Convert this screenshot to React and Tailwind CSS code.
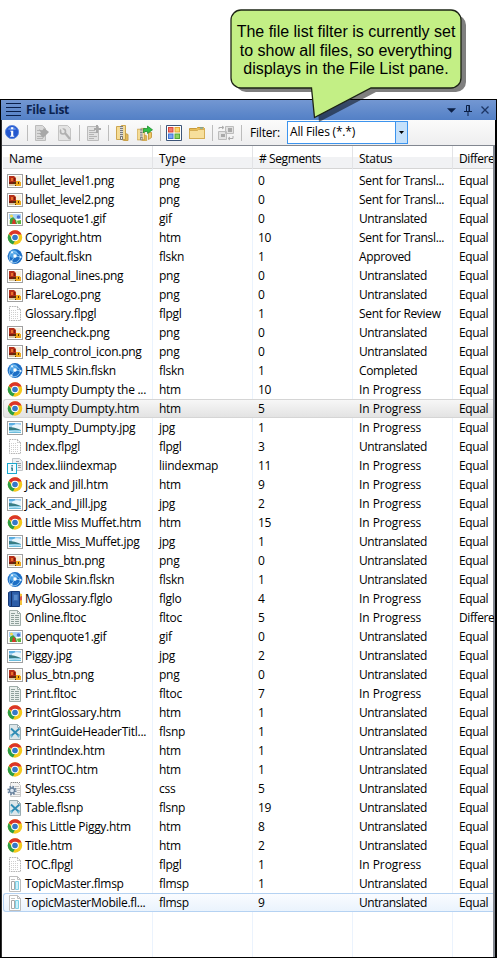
import React from "react";

const PNG = "png", HTM = "htm";
// name, type, segments, status, difference, icon
const rows = [
  ["bullet_level1.png", "png", "0", "Sent for Transl...", "Equal", PNG],
  ["bullet_level2.png", "png", "0", "Sent for Transl...", "Equal", PNG],
  ["closequote1.gif", "gif", "0", "Untranslated", "Equal", "gif"],
  ["Copyright.htm", "htm", "10", "Sent for Transl...", "Equal", HTM],
  ["Default.flskn", "flskn", "1", "Approved", "Equal", "skin"],
  ["diagonal_lines.png", "png", "0", "Untranslated", "Equal", PNG],
  ["FlareLogo.png", "png", "0", "Untranslated", "Equal", PNG],
  ["Glossary.flpgl", "flpgl", "1", "Sent for Review", "Equal", "page"],
  ["greencheck.png", "png", "0", "Untranslated", "Equal", PNG],
  ["help_control_icon.png", "png", "0", "Untranslated", "Equal", PNG],
  ["HTML5 Skin.flskn", "flskn", "1", "Completed", "Equal", "skin"],
  ["Humpty Dumpty the ...", "htm", "10", "In Progress", "Equal", HTM],
  ["Humpty Dumpty.htm", "htm", "5", "In Progress", "Equal", HTM],
  ["Humpty_Dumpty.jpg", "jpg", "1", "In Progress", "Equal", "jpg"],
  ["Index.flpgl", "flpgl", "3", "Untranslated", "Equal", "page"],
  ["Index.liindexmap", "liindexmap", "11", "In Progress", "Equal", "index"],
  ["Jack and Jill.htm", "htm", "9", "In Progress", "Equal", HTM],
  ["Jack_and_Jill.jpg", "jpg", "2", "In Progress", "Equal", "jpg"],
  ["Little Miss Muffet.htm", "htm", "15", "In Progress", "Equal", HTM],
  ["Little_Miss_Muffet.jpg", "jpg", "1", "Untranslated", "Equal", "jpg"],
  ["minus_btn.png", "png", "0", "Untranslated", "Equal", PNG],
  ["Mobile Skin.flskn", "flskn", "1", "Untranslated", "Equal", "skin"],
  ["MyGlossary.flglo", "flglo", "4", "In Progress", "Equal", "book"],
  ["Online.fltoc", "fltoc", "5", "In Progress", "Differe", "toc"],
  ["openquote1.gif", "gif", "0", "Untranslated", "Equal", "gif"],
  ["Piggy.jpg", "jpg", "2", "Untranslated", "Equal", "jpg"],
  ["plus_btn.png", "png", "0", "Untranslated", "Equal", PNG],
  ["Print.fltoc", "fltoc", "7", "In Progress", "Equal", "toc"],
  ["PrintGlossary.htm", "htm", "1", "Untranslated", "Equal", HTM],
  ["PrintGuideHeaderTitl...", "flsnp", "1", "Untranslated", "Equal", "snippet"],
  ["PrintIndex.htm", "htm", "1", "Untranslated", "Equal", HTM],
  ["PrintTOC.htm", "htm", "1", "Untranslated", "Equal", HTM],
  ["Styles.css", "css", "5", "Untranslated", "Equal", "css"],
  ["Table.flsnp", "flsnp", "19", "Untranslated", "Equal", "snippet"],
  ["This Little Piggy.htm", "htm", "8", "Untranslated", "Equal", HTM],
  ["Title.htm", "htm", "2", "Untranslated", "Equal", HTM],
  ["TOC.flpgl", "flpgl", "1", "In Progress", "Equal", "page"],
  ["TopicMaster.flmsp", "flmsp", "1", "Untranslated", "Equal", "master"],
  ["TopicMasterMobile.fl...", "flmsp", "9", "Untranslated", "Equal", "master"],
];

const Frame = ({ children }) => (
  <>
    <rect x=".5" y="1.5" width="15" height="13" fill="#fff" stroke="#a0a0a0" />
    {children}
  </>
);

const Page = ({ fill = "#fff", stroke = "#bdbdbd" }) => (
  <path d="M2.5 .5h8l3 3v12h-11z M10.5 .5v3h3" fill={fill} stroke={stroke} />
);

const fileIcons = {
  png: (
    <Frame>
      <path d="M2 3h12v10H2z" fill="#f6eedb" />
      <path d="M2 3h5l2 2v4H2z" fill="#b5301a" />
      <path d="M4 5h2v3H4z" fill="#e8702c" />
      <path d="M2 9h4v2H2zM7 5h1v3H7z" fill="#7a1c0c" />
      <path d="M2 11h6v2H2z" fill="#d9c9a4" />
      <path d="M9 8h4v1h1v4H8v-3h1z" fill="#f0ac1c" />
      <path d="M6 9h3v2H6zM11 9h1v2h-1zM8 12h1v1H8z" fill="#5a300c" />
    </Frame>
  ),
  jpg: (
    <Frame>
      <path d="M2 3h12v5H2z" fill="#9fd0f2" />
      <path d="M2 3h6v2H2z" fill="#5aaee2" />
      <path d="M5 6q3-3 9-1v4H5z" fill="#eaf6fc" />
      <path d="M2 7q5 0 12 3v1H2z" fill="#377c84" />
      <path d="M2 10h12v3H2z" fill="#6cbcdc" />
      <path d="M2 11.500q6-1 12 0" stroke="#cdeef8" fill="none" />
    </Frame>
  ),
  gif: (
    <Frame>
      <path d="M2 3h12v5H2z" fill="#a9d2f5" />
      <path d="M2 9h12v4H2z" fill="#dceec2" />
      <path d="M3 8l3-2 3 3 1 4H3z" fill="#39a33a" />
      <path d="M6 8l2 1 1 4H5z" fill="#d43a28" />
      <circle cx="11.5" cy="6" r="1.8" fill="#4b70ce" />
      <circle cx="4.5" cy="5" r="1.5" fill="#f3d64d" />
      <path d="M10 10l4-1v4h-3z" fill="#5bb63d" />
    </Frame>
  ),
  htm: (
    <>
      <circle cx="8" cy="7.5" r="7.2" fill="#f4c91c" />
      <path d="M8 7.500L1.800 3.900A7.200 7.200 0 0 1 14.600 4.500H8z" fill="#dc3528" />
      <path d="M1.800 3.900L5.200 9.500l3 1-2.200 4A7.200 7.200 0 0 1 1.800 3.900z" fill="#2c9e46" />
      <circle cx="8" cy="7.5" r="3.8" fill="#fff" />
      <circle cx="8" cy="7.5" r="2.8" fill="#3478c8" />
    </>
  ),
  skin: (
    <>
      <circle cx="8" cy="7.5" r="7.4" fill="#1d6fc6" />
      <circle cx="6.5" cy="5" r="4" fill="#4da2e6" />
      <path d="M8 7L5 3M8 7l6 1M8 7l-4 6M5 3Q9 1 14 8M4 13Q0 8 5 3M4 13q6 3 10-5" fill="none" stroke="#9ccff4" strokeWidth=".8" />
      <circle cx="8" cy="7" r="1.7" fill="#fff" />
      <circle cx="5" cy="3.3" r="1.1" fill="#e6f5ff" />
      <circle cx="13.5" cy="8" r="1.1" fill="#e6f5ff" />
      <circle cx="4.5" cy="12.5" r="1.1" fill="#e6f5ff" />
    </>
  ),
  page: (
    <>
      <path d="M2.5 .5h8l3 3v11h-11z M10.5 .5v3h3" fill="#fff" stroke="#b4b4b4" strokeDasharray="1.6 .8" />
      <path d="M4 4.5h5M4 6.5h8M4 8.5h8M4 10.5h8M4 12.5h8" stroke="#cfcfcf" strokeDasharray="1 1" />
    </>
  ),
  index: (
    <>
      <path d="M5.5 .5h7l3 3v9h-10z" fill="#eef0f2" stroke="#c3c6c9" />
      <path d="M9 3.5h3M10 5.5h4M11 7.5h3M11 9.5h3" stroke="#9aa0a6" />
      <rect x=".5" y="5.5" width="9" height="10" fill="#f2fcff" stroke="#1aa9cf" />
      <path d="M4.500 7h1.200v1.400H4.500zM4 9.500h1.800V13H4.500v-2.600H4z" fill="#14647e" />
    </>
  ),
  book: (
    <>
      <path d="M11 2l4 1v11h-4z" fill="#f5c33a" />
      <path d="M12 6l3-1v4l-3 1z" fill="#e0574a" />
      <path d="M1.5 1.5l2-1h9v15h-10l-1-1z" fill="#2c5da8" stroke="#173a78" />
      <path d="M4.5 1v14" stroke="#142f66" />
      <path d="M6.5 3.5h4.500v6H6.500z" fill="#5689cc" stroke="#3a6ab0" />
    </>
  ),
  toc: (
    <>
      <Page fill="#e9efec" stroke="#9fada9" />
      <path d="M4 3.5h4M4 5.5h3m1 0h4M4 7.5h3m1 0h4M4 9.5h3m1 0h4M4 11.5h3m1 0h4M4 13.5h3m1 0h4" stroke="#8fa09b" />
    </>
  ),
  snippet: (
    <>
      <Page fill="#dce6e9" stroke="#9aacb1" />
      <path d="M4 4.5l8 7.5M12.5 4.5L4 12" stroke="#2f8cb4" strokeWidth="1.8" />
      <path d="M3 10l3 2-2 2zM13 10l-3 2 2 2z" fill="#6cb8d4" />
    </>
  ),
  css: (
    <>
      <path d="M3.5 1.5h7l3 3v11h-10z" fill="#f4f4f4" stroke="#c9c9c9" />
      <path d="M4 1.5h9" stroke="#888" strokeDasharray="1 1" />
      <path d="M8 5.5h4M9 7.5h4M10 9.5h3M10 11.5h3M8 13.5h5" stroke="#c4c4c4" />
      <circle cx="5" cy="9.5" r="3.7" fill="none" stroke="#66809c" strokeWidth="2" strokeDasharray="1.6 1.3" />
      <circle cx="5" cy="9.5" r="2.5" fill="#dce7f2" stroke="#66809c" strokeWidth="1.3" />
    </>
  ),
  master: (
    <>
      <Page />
      <path d="M4.5 5.5h3v8h-3z" fill="#fff" stroke="#a8a8a8" />
      <path d="M8.500 5.500h3v8h-3z" fill="#cdf1fb" stroke="#80cfe4" />
      <path d="M4 3.5h4" stroke="#c4c4c4" />
    </>
  ),
};

const Icon = ({ children, size = "size-4", className = "" }) => (
  <svg viewBox="0 0 16 16" className={`${size} shrink-0 ${className}`} fill="none">
    {children}
  </svg>
);

const Sep = ({ className = "" }) => <div className={`h-4 w-px shrink-0 bg-[#bcbcbc] ${className}`} />;

function Titlebar() {
  return (
    <div className="flex h-5 shrink-0 items-center bg-linear-to-b from-[#7397d2] to-[#5380c6] pr-[7px] pl-[5px]">
      <svg viewBox="0 0 15 14" className="h-[14px] w-[15px] shrink-0" stroke="#0a1f4a">
        <path d="M0 .5h15M0 4.5h15M0 8.5h15M0 12.5h15" />
      </svg>
      <span className="ml-[5px] flex-1 text-[12px] font-bold tracking-[-0.3px] text-[#0b2350]">File List</span>
      <svg viewBox="0 0 10 5" className="mr-2 h-[5px] w-[9px]"><path d="M0 0h10L5 5z" fill="#0b1f45" /></svg>
      <svg viewBox="0 0 8 12" className="mr-[9px] h-3 w-2" fill="none" stroke="#0b1f45">
        <path d="M2.5 7V1.5h3V7M5 1v6M0 7.5h8M4 8v4" />
      </svg>
      <svg viewBox="0 0 8 8" className="h-2 w-2" stroke="#1c3564" strokeWidth="1.3"><path d="M.5.5l7 7M7.5.5l-7 7" /></svg>
    </div>
  );
}

const ZipFolder = () => (
  <g>
    <path d="M1.5 1.5h4l1-1h4v14h-9z" fill="#f5dc96" stroke="#cda650" />
    <path d="M10.5 8.5l2.500 1v6h-4l-2-1h3.500z" fill="#e5b956" stroke="#c9a04a" />
    <path d="M6.500 1v11" stroke="#d8d8d8" strokeWidth="3" />
    <path d="M6.500 1v11" stroke="#7b7b7b" strokeWidth="3" strokeDasharray="1 1" />
    <path d="M5.500 11.500h2v3h-2z" fill="#eee" stroke="#777" />
  </g>
);

function Toolbar() {
  return (
    <div className="flex h-[25px] shrink-0 items-center bg-linear-to-b from-[#fbfbfb] to-[#eeeeef] pl-[3px]">
      <Icon size="size-[15px]">
        <circle cx="7.500" cy="7.500" r="7" fill="#2457ce" stroke="#5b86df" />
        <path d="M2.500 4.500q5-5 10 0-5 2-10 0" fill="#5d8be8" />
        <path d="M6.500 2.500h2.300v2H6.500zM5.500 6h3.300v5.500h1v1H5.500v-1h1V7H5.500z" fill="#fff" />
      </Icon>
      <Sep className="ml-[7px]" />
      <Icon className="ml-[6px]">
        <path d="M1.5 .5h7l3 3v12h-10z" fill="#dadada" stroke="#bcbcbc" />
        <path d="M3 5.5h6M3 8.5h6M3 11.5h6M3 13.500h6" stroke="#b4b4b4" />
        <path d="M5 4l3 2 2-3 5 4-6 6-4-5h2z" fill="#a8a8a8" />
      </Icon>
      <Icon className="ml-[7px]">
        <path d="M1.5 .5h9l3 3v12h-12z" fill="#e4e4e4" stroke="#c4c4c4" />
        <circle cx="6" cy="6.500" r="2.500" stroke="#b0b0b0" strokeWidth="1.6" />
        <path d="M8 8l5 6" stroke="#b0b0b0" strokeWidth="2.2" />
        <path d="M4 3l2 3" stroke="#e4e4e4" strokeWidth="2" />
      </Icon>
      <Sep className="ml-[6px]" />
      <Icon className="ml-[7px]">
        <path d="M.5 1.5h11v14H.5z" fill="#e2e2e2" stroke="#bcbcbc" />
        <path d="M2 5.5h6M2 7.5h8M2 9.5h5M2 11.5h8M2 13.5h5" stroke="#b4b4b4" />
        <path d="M9 0h2v3h3v2h-3v3H9V5H7V3h2z" fill="#a9a9a9" />
      </Icon>
      <Sep className="ml-[5px]" />
      <Icon className="ml-[6px]"><ZipFolder /></Icon>
      <Icon className="ml-[6px]">
        <g transform="translate(-1 3) scale(.82)"><ZipFolder /></g>
        <path d="M11.500 7.500h3v5l-3 2z" fill="#efc966" stroke="#c9a04a" />
        <path d="M6.500 3.500H10.500V1l5 3.800-5 3.700V6.500H8l-1.500 1.500z" fill="#2fc043" stroke="#168428" strokeWidth=".7" />
      </Icon>
      <Sep className="ml-[7px]" />
      <Icon className="ml-[5px]">
        <path d="M.5 .5h15v15H.5z" fill="#fff" stroke="#3d5578" />
        <path d="M2 2h5.500v5.500H2z" fill="#dc4438" />
        <path d="M3 3h3.500v3.500H3z" fill="#f0776a" />
        <path d="M8.500 2H14v5.500H8.500z" fill="#e8a530" />
        <path d="M9.500 3H13v3.500H9.500z" fill="#f9d46c" />
        <path d="M2 8.500h5.500V14H2z" fill="#3f73d5" />
        <path d="M3 9.500h3.500V13H3z" fill="#78a4f4" />
        <path d="M8.500 8.500H14V14H8.500z" fill="#55a636" />
        <path d="M9.500 9.500H13V13H9.500z" fill="#8ed45e" />
      </Icon>
      <Icon className="ml-[7px]">
        <path d="M.5 3.5h7l1-1h6l1 1v10H.5z" fill="#e9bd54" stroke="#c79b3d" />
        <path d="M.5 5.5h8l1-1h6v9H.5z" fill="#f7df9c" stroke="#d5ad55" />
        <path d="M11 3h3" stroke="#4ba5d5" />
      </Icon>
      <Sep className="ml-[7px]" />
      <Icon className="ml-[5px]">
        <path d="M7.5 1.5h8v7h-8zM.5 6.500h8v8h-8z" fill="#e2e2e2" stroke="#bcbcbc" />
        <path d="M10 3h4v4h-4zM3 9h4v3H3z" fill="#a9a9a9" />
        <path d="M1 4V2.500h4M4 1l2 1.500L4 4M15 11v2.500h-4M12 12l-2 1.500L12 15" stroke="#aaa" />
      </Icon>
      <Sep className="ml-[7px]" />
      <span className="ml-[8px] text-[12px] tracking-[-0.2px]">Filter:</span>
      <div className="ml-auto mr-[87px] flex h-[23px] w-[121px] border border-[#3c94ee] bg-white">
        <span className="flex-1 pl-[2px] text-[12px] leading-5 tracking-[-0.2px]">All Files (*.*)</span>
        <div className="flex w-3 items-center justify-center border-l border-[#3c94ee] bg-[#c5e1fb]">
          <svg viewBox="0 0 5 3" className="h-[3px] w-[5px]"><path d="M0 0h5L2.5 3z" fill="#000" /></svg>
        </div>
      </div>
    </div>
  );
}

const grid = "grid grid-cols-[150px_100px_100px_100px_40px]";

const statusTracking = {
  Untranslated: "tracking-[-0.44px]",
  "In Progress": "tracking-[-0.05px]",
};

function FileRow({ row, index }) {
  const [name, type, segments, status, diff, icon] = row;
  const selected = index === 12;
  const focused = index === 38;
  const tone = selected
    ? "border-[#d5d5d5] bg-linear-to-b from-[#f7f7f7] to-[#e3e3e3]"
    : focused
    ? "border-[#b5d2f2] bg-linear-to-b from-[#fafcff] to-[#eaf3fd]"
    : "border-transparent";
  return (
    <div className={`${grid} h-[19px] rounded-l-[3px] border border-r-0 leading-[17px] ${tone}`}>
      <div className="flex items-center pl-[3px]">
        <Icon>{fileIcons[icon]}</Icon>
        <span className="pl-[2px] whitespace-nowrap">{name}</span>
      </div>
      <span className="pl-[5px]">{type}</span>
      <span className="pl-[4px]">{segments}</span>
      <span className={`pl-[5px] whitespace-nowrap ${statusTracking[status] ?? "tracking-[-0.33px]"}`}>{status}</span>
      <span className="overflow-hidden pl-[5px] tracking-[-0.4px]">{diff}</span>
    </div>
  );
}

function Callout() {
  return (
    <div className="absolute top-[9px] left-[230px] h-[114px] w-[240px]">
      <svg viewBox="0 0 240 114" className="absolute inset-0 h-full w-full">
        <path d="M16 6H226a10 10 0 0 1 10 10V73a10 10 0 0 1-10 10H146L89 113 86 83H16A10 10 0 0 1 6 73V16A10 10 0 0 1 16 6z" fill="#000" fillOpacity=".5" />
        <path d="M11 1H221a10 10 0 0 1 10 10V69a10 10 0 0 1-10 10H141L84.500 108.500 81.500 79H11A10 10 0 0 1 1 69V11A10 10 0 0 1 11 1z" fill="#c3ef85" stroke="#1d2415" strokeWidth="1.3" />
      </svg>
      <p className="relative w-[232px] pt-[14px] text-center font-['Liberation_Sans',Arial,sans-serif] text-[16px] leading-[18.5px] whitespace-nowrap text-black">
        The file list filter is currently set
        <br />
        to show all files, so everything
        <br />
        displays in the File List pane.
      </p>
    </div>
  );
}

export default function App() {
  return (
    <div className="relative h-[958px] w-[497px] overflow-hidden bg-white pt-[99px] font-['Open_Sans','Noto_Sans',sans-serif] text-black">
      <div className="flex h-[859px] flex-col border-t border-r border-b border-l border-black">
        <Titlebar />
        <div className="flex min-h-0 flex-1 flex-col border-r border-l border-r-black border-l-[#303030] bg-[#f0f0f0]">
          <Toolbar />
          <div className="flex min-h-0 flex-1 flex-col border-t border-r-2 border-[#828790] bg-white pl-px text-[12px] tracking-[-0.28px]">
            <div className={`${grid} h-[23px] shrink-0 border-b border-[#d5d5d5] bg-linear-to-b from-white from-50% to-[#f1f2f4] to-50% leading-[25px]`}>
              <div className="border-r border-[#e2e3e6] pl-[6px] tracking-normal">Name</div>
              <div className="border-r border-[#e2e3e6] pl-[6px] tracking-normal">Type</div>
              <div className="border-r border-[#e2e3e6] pl-[6px] tracking-[-0.4px]"># Segments</div>
              <div className="border-r border-[#e2e3e6] pl-[6px]">Status</div>
              <div className="overflow-hidden pl-[6px] tracking-[-0.4px]">Differe</div>
            </div>
            <div className="relative min-h-0 flex-1 pt-[2px]">
              <div className={`${grid} absolute inset-y-0 left-0`}>
                <div className="border-r border-[#ebf3fd]" />
                <div className="border-r border-[#ebf3fd]" />
                <div className="border-r border-[#ebf3fd]" />
                <div className="border-r border-[#ebf3fd]" />
              </div>
              <div className="relative">
                {rows.map((row, i) => (
                  <FileRow key={row[0]} row={row} index={i} />
                ))}
              </div>
            </div>
          </div>
        </div>
      </div>
      <Callout />
    </div>
  );
}
